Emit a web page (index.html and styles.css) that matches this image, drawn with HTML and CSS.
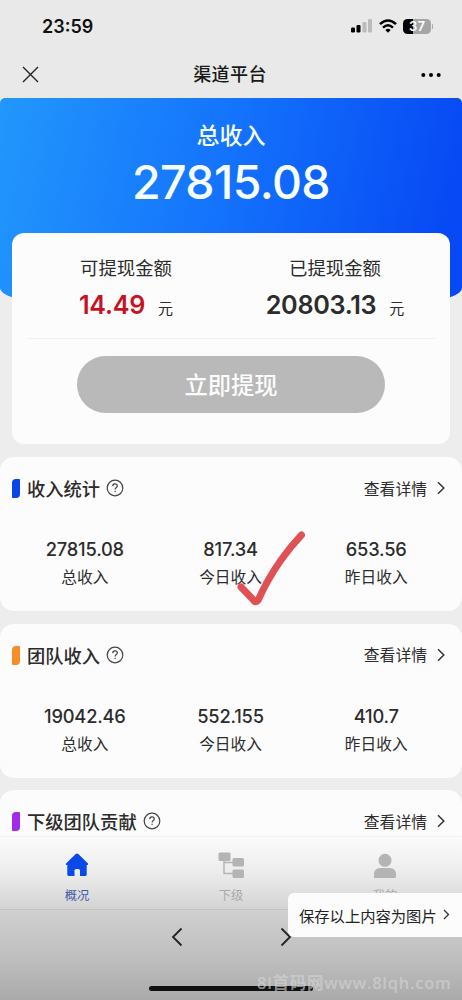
FILE: index.html
```html
<!DOCTYPE html>
<html lang="zh-CN">
<head>
<meta charset="utf-8">
<meta name="viewport" content="width=device-width">
<title>渠道平台</title>
<link rel="stylesheet" href="styles.css">
</head>
<body>
<div class="phone">
  <header class="top">
    <div class="status">
      <span class="time">23:59</span>
      <div class="signals">
        <svg class="bars" width="22" height="14" viewBox="0 0 22 14"><rect x="0" y="8.5" width="4" height="5" rx="1.2"/><rect x="5.5" y="6" width="4" height="7.5" rx="1.2"/><rect class="dim" x="11.5" y="3" width="4" height="10.5" rx="1.2"/><rect class="dim" x="17" y="0" width="4" height="13.5" rx="1.2"/></svg>
        <svg class="wifi" width="18" height="14" viewBox="0 0 18 14"><path d="M1 5.2Q9-2.2 17 5.2M4 8.6Q9 4 14 8.6" fill="none" stroke="#000" stroke-width="2.5"/><path d="M6.3 11Q9 8.6 11.7 11L9 13.8Z"/></svg>
        <div class="battery"><span class="level">37</span><i class="cap"></i></div>
      </div>
    </div>
    <div class="nav">
      <svg width="17" height="17" viewBox="0 0 17 17"><path d="M1 1L16 16M16 1L1 16" fill="none" stroke="#222" stroke-width="1.4"/></svg>
      <h1 class="title">渠道平台</h1>
      <svg width="20" height="6" viewBox="0 0 20 6"><circle cx="2.3" cy="3" r="2"/><circle cx="10" cy="3" r="2"/><circle cx="17.7" cy="3" r="2"/></svg>
    </div>
  </header>

  <section class="hero">
    <p class="hero-label">总收入</p>
    <p class="hero-value">27815.08</p>
  </section>

  <section class="wallet">
    <div class="balances">
      <div class="balance available">
        <p class="balance-label">可提现金额</p>
        <p class="amount red"><b>14.49</b><span>元</span></p>
      </div>
      <div class="balance withdrawn">
        <p class="balance-label">已提现金额</p>
        <p class="amount"><b>20803.13</b><span>元</span></p>
      </div>
    </div>
    <button class="withdraw">立即提现</button>
  </section>

  <main class="sections">
    <section class="panel">
      <div class="panel-head">
        <i class="mark blue"></i><h2>收入统计</h2>
        <svg class="help" width="18" height="18" viewBox="0 0 18 18"><circle cx="9" cy="9" r="7.8"/><path d="M6.7 7.1Q6.8 4.9 9 4.9T11.3 6.9C11.3 8.5 9.1 8.5 9.1 10.5M9.1 11.7V13"/></svg>
        <span class="more">查看详情</span>
        <svg class="arrow" width="8" height="14" viewBox="0 0 8 14"><path d="M1 1.2L6.8 7L1 12.8"/></svg>
      </div>
      <div class="stats">
        <div class="stat"><b>27815.08</b><span>总收入</span></div>
        <div class="stat"><b>817.34</b><span>今日收入</span></div>
        <div class="stat"><b>653.56</b><span>昨日收入</span></div>
      </div>
      <svg class="tick" width="80" height="84" viewBox="0 0 80 84"><path d="M10 56L22 68.500Q24.500 73 27.500 68.500Q36 49 50 29Q60 15 70.500 4"/></svg>
    </section>
    <section class="panel">
      <div class="panel-head">
        <i class="mark orange"></i><h2>团队收入</h2>
        <svg class="help" width="18" height="18" viewBox="0 0 18 18"><circle cx="9" cy="9" r="7.8"/><path d="M6.7 7.1Q6.8 4.9 9 4.9T11.3 6.9C11.3 8.5 9.1 8.5 9.1 10.5M9.1 11.7V13"/></svg>
        <span class="more">查看详情</span>
        <svg class="arrow" width="8" height="14" viewBox="0 0 8 14"><path d="M1 1.2L6.8 7L1 12.8"/></svg>
      </div>
      <div class="stats">
        <div class="stat"><b>19042.46</b><span>总收入</span></div>
        <div class="stat"><b>552.155</b><span>今日收入</span></div>
        <div class="stat"><b>410.7</b><span>昨日收入</span></div>
      </div>
    </section>
    <section class="panel last">
      <div class="panel-head">
        <i class="mark purple"></i><h2>下级团队贡献</h2>
        <svg class="help" width="18" height="18" viewBox="0 0 18 18"><circle cx="9" cy="9" r="7.8"/><path d="M6.7 7.1Q6.8 4.9 9 4.9T11.3 6.9C11.3 8.5 9.1 8.5 9.1 10.5M9.1 11.7V13"/></svg>
        <span class="more">查看详情</span>
        <svg class="arrow" width="8" height="14" viewBox="0 0 8 14"><path d="M1 1.2L6.8 7L1 12.8"/></svg>
      </div>
    </section>
  </main>

  <nav class="tabs">
    <div class="tab active">
      <svg width="28" height="28" viewBox="0 0 28 28"><path d="M14 1.500Q14.700 1.500 15.300 2.100L25 11.600Q25.700 13 24.300 13H23.700V22.500Q23.700 24 22.200 24H17V18.500Q17 17 15.500 17H13Q11.500 17 11.500 18.500V24H5.800Q4.300 24 4.300 22.500V13H3.500Q2.200 13 3 11.600L12.700 2.100Q13.300 1.500 14 1.500Z"/></svg>
      <span>概况</span>
    </div>
    <div class="tab">
      <svg width="28" height="28" viewBox="0 0 28 28"><rect x="1.500" y=".5" width="12" height="8.500" rx="1.500"/><rect x="15.500" y="6" width="11.500" height="8.500" rx="1.500"/><rect x="15.500" y="17.500" width="11.500" height="8.500" rx="1.500"/><path d="M7 8V21.500H16M7 10.500H16" fill="none" stroke="#b4b4b4" stroke-width="1.500"/></svg>
      <span>下级</span>
    </div>
    <div class="tab">
      <svg width="28" height="28" viewBox="0 0 28 28"><circle cx="14" cy="8.300" r="6.500"/><path d="M3 26V22.500Q3 16 9.500 16H18.500Q25 16 25 22.500V24.500Q25 26 23.500 26Z"/></svg>
      <span>我的</span>
    </div>
  </nav>

  <footer class="browser">
    <svg width="12" height="20" viewBox="0 0 12 20"><path d="M10.500 1.500L2 10L10.500 18.500"/></svg>
    <svg width="12" height="20" viewBox="0 0 12 20"><path d="M1.500 1.500L10 10L1.500 18.500"/></svg>
  </footer>
  <i class="home-bar"></i>
  <div class="save"><span>保存以上内容为图片</span><svg width="7" height="11" viewBox="0 0 7 11"><path d="M1 1L5.500 5.500L1 10"/></svg></div>
  <div class="watermark">8l首码网www.8lqh.com</div>
</div>
</body>
</html>
```

FILE: styles.css
```css
* { box-sizing: border-box; }
body, p, h1, h2 { margin: 0; }
body { background: #e9e9e9; }
.phone {
  position: relative;
  width: 462px;
  height: 1000px;
  overflow: hidden;
  display: flex;
  flex-direction: column;
  background: #ededee;
  color: #2c2c2c;
  font-family: Inter, "Noto Sans CJK SC", sans-serif;
}
.top { height: 98px; flex: none; background: #e9e9e9; }
.status { height: 52px; padding: 0 31px 0 42px; display: flex; align-items: center; justify-content: space-between; }
.time { font-size: 18px; font-weight: 600; color: #111; }
.signals { display: flex; align-items: center; gap: 6px; }
.dim { fill: #bcbcbc; }
.battery { position: relative; width: 28px; height: 15px; border-radius: 4.500px; background: linear-gradient(90deg, #050505 37%, #a5a5a5 37%); display: flex; align-items: center; justify-content: center; color: #fff; }
.level { font-size: 13px; font-weight: 600; line-height: 15px; }
.cap { position: absolute; right: -2px; top: 5px; width: 1px; height: 5px; background: #aaa; border-radius: 1px; }
.nav { height: 46px; padding: 0 21px 1px 22px; display: flex; align-items: center; justify-content: space-between; }
.title { font-size: 18px; font-weight: 500; color: #181818; line-height: 26px; letter-spacing: .4px; }
.hero {
  height: 202px;
  flex: none;
  padding-top: 21px;
  text-align: center;
  color: #f5fdff;
  background: linear-gradient(102deg, #2297fc 0%, #1473fc 47%, #0749f4 94%);
  border-radius: 5px 5px 34px 34px / 5px 5px 12px 12px;
}
.hero-label { font-size: 23px; line-height: 34px; font-weight: 500; }
.hero-value { font-size: 46.500px; line-height: 58px; font-weight: 500; letter-spacing: -.6px; }
.wallet {
  height: 211px;
  flex: none;
  margin: -67px 12px 0;
  padding: 0 15px;
  border-radius: 12px;
  background: #fcfcfc;
  display: flex;
  flex-direction: column;
  align-items: center;
}
.balances { width: 100%; height: 106px; padding-top: 21px; border-bottom: 1px solid #f1f1f1; display: flex; }
.balance { display: flex; flex-direction: column; align-items: center; }
.available { width: 202px; }
.withdrawn { width: 206px; padding-left: 6px; flex: none; margin-left: 4px; }
.balance-label { font-size: 18.400px; line-height: 28px; white-space: nowrap; }
.amount { height: 44px; padding-top: 1px; display: flex; align-items: baseline; gap: 13px; line-height: 44px; white-space: nowrap; }
.amount b { font-size: 25.200px; font-weight: 600; letter-spacing: -.3px; }
.amount span { font-size: 15px; }
.red b { color: #c6131f; }
.withdraw { width: 308px; height: 57px; margin-top: 17px; padding: 0 0 1px; border: 0; border-radius: 29px; background: #b9b9b9; color: #fcfcfc; font: 500 23.300px/34px "Noto Sans CJK SC", sans-serif; }
.sections { margin-top: 13px; height: 379px; flex: none; display: flex; flex-direction: column; gap: 12.500px; }
.panel { position: relative; height: 154px; flex: none; border-radius: 14px; background: #fcfcfc; }
.last { height: 46px; border-radius: 14px 14px 0 0; }
.panel-head { height: 62px; padding: 0 17px 0 12px; display: flex; align-items: center; }
.panel h2 { margin: 2px 7px 0; font-size: 18.300px; line-height: 26px; font-weight: 500; white-space: nowrap; }
.mark { width: 8px; height: 19px; margin-top: 1px; border-radius: 4px 1px 4px 1px; }
.blue { background: #0a45ec; }
.orange { background: #f68e27; }
.purple { background: #a12bea; }
.help { margin-left: -1px; fill: none; stroke: #444; stroke-width: 1.200; }
.more { margin-left: auto; font-size: 15.800px; }
.arrow { margin-left: 10px; fill: none; stroke: #333; stroke-width: 1.500; }
.stats { padding: 16px 12px 0; display: grid; grid-template-columns: repeat(3, 145.700px); }
.stat { display: flex; flex-direction: column; align-items: center; }
.stat b { font-size: 18.300px; line-height: 28px; font-weight: 500; letter-spacing: -.2px; }
.stat span { margin-top: 1px; font-size: 15.700px; line-height: 28px; }
.tick { position: absolute; left: 231px; top: 74px; fill: none; stroke: #e05156; stroke-width: 7; stroke-linecap: round; stroke-linejoin: round; }
.tabs { height: 74px; flex: none; padding: 15px 0 0; border-top: 1px solid #f1f1f1; border-bottom: 1px solid #c1c1c1; background: linear-gradient(#fbfbfb, #ececec 50%, #d3d3d3); display: grid; grid-template-columns: repeat(3, 154px); color: #aaa; }
.tab { display: flex; flex-direction: column; align-items: center; fill: #b4b4b4; }
.tab span { margin-top: 7px; font-size: 12.300px; line-height: 18px; }
.active { fill: #0a48e8; color: #3d5ca6; }
.browser { height: 90px; flex: none; padding: 17px 0 0; background: linear-gradient(#d0d0d0, #bebebe 55%, #aaa); display: flex; justify-content: center; align-items: flex-start; gap: 97px; fill: none; stroke: #222; stroke-width: 1.800; }
.home-bar { position: absolute; left: 149px; top: 986px; width: 164px; height: 5px; border-radius: 3px; background: #111; }
.save { position: absolute; left: 288px; top: 893px; width: 174px; height: 44px; padding: 0 12px 1px 11px; border-radius: 6px 0 0 6px; background: #fcfcfc; display: flex; align-items: center; justify-content: space-between; font-size: 15.300px; color: #222; white-space: nowrap; }
.save svg { fill: none; stroke: #333; stroke-width: 1.300; }
.watermark { position: absolute; left: 257px; top: 971px; font: 600 16.500px/24px "Open Sans", "Noto Sans CJK SC", sans-serif; letter-spacing: .75px; color: rgba(212, 212, 212, .65); white-space: nowrap; }
```
